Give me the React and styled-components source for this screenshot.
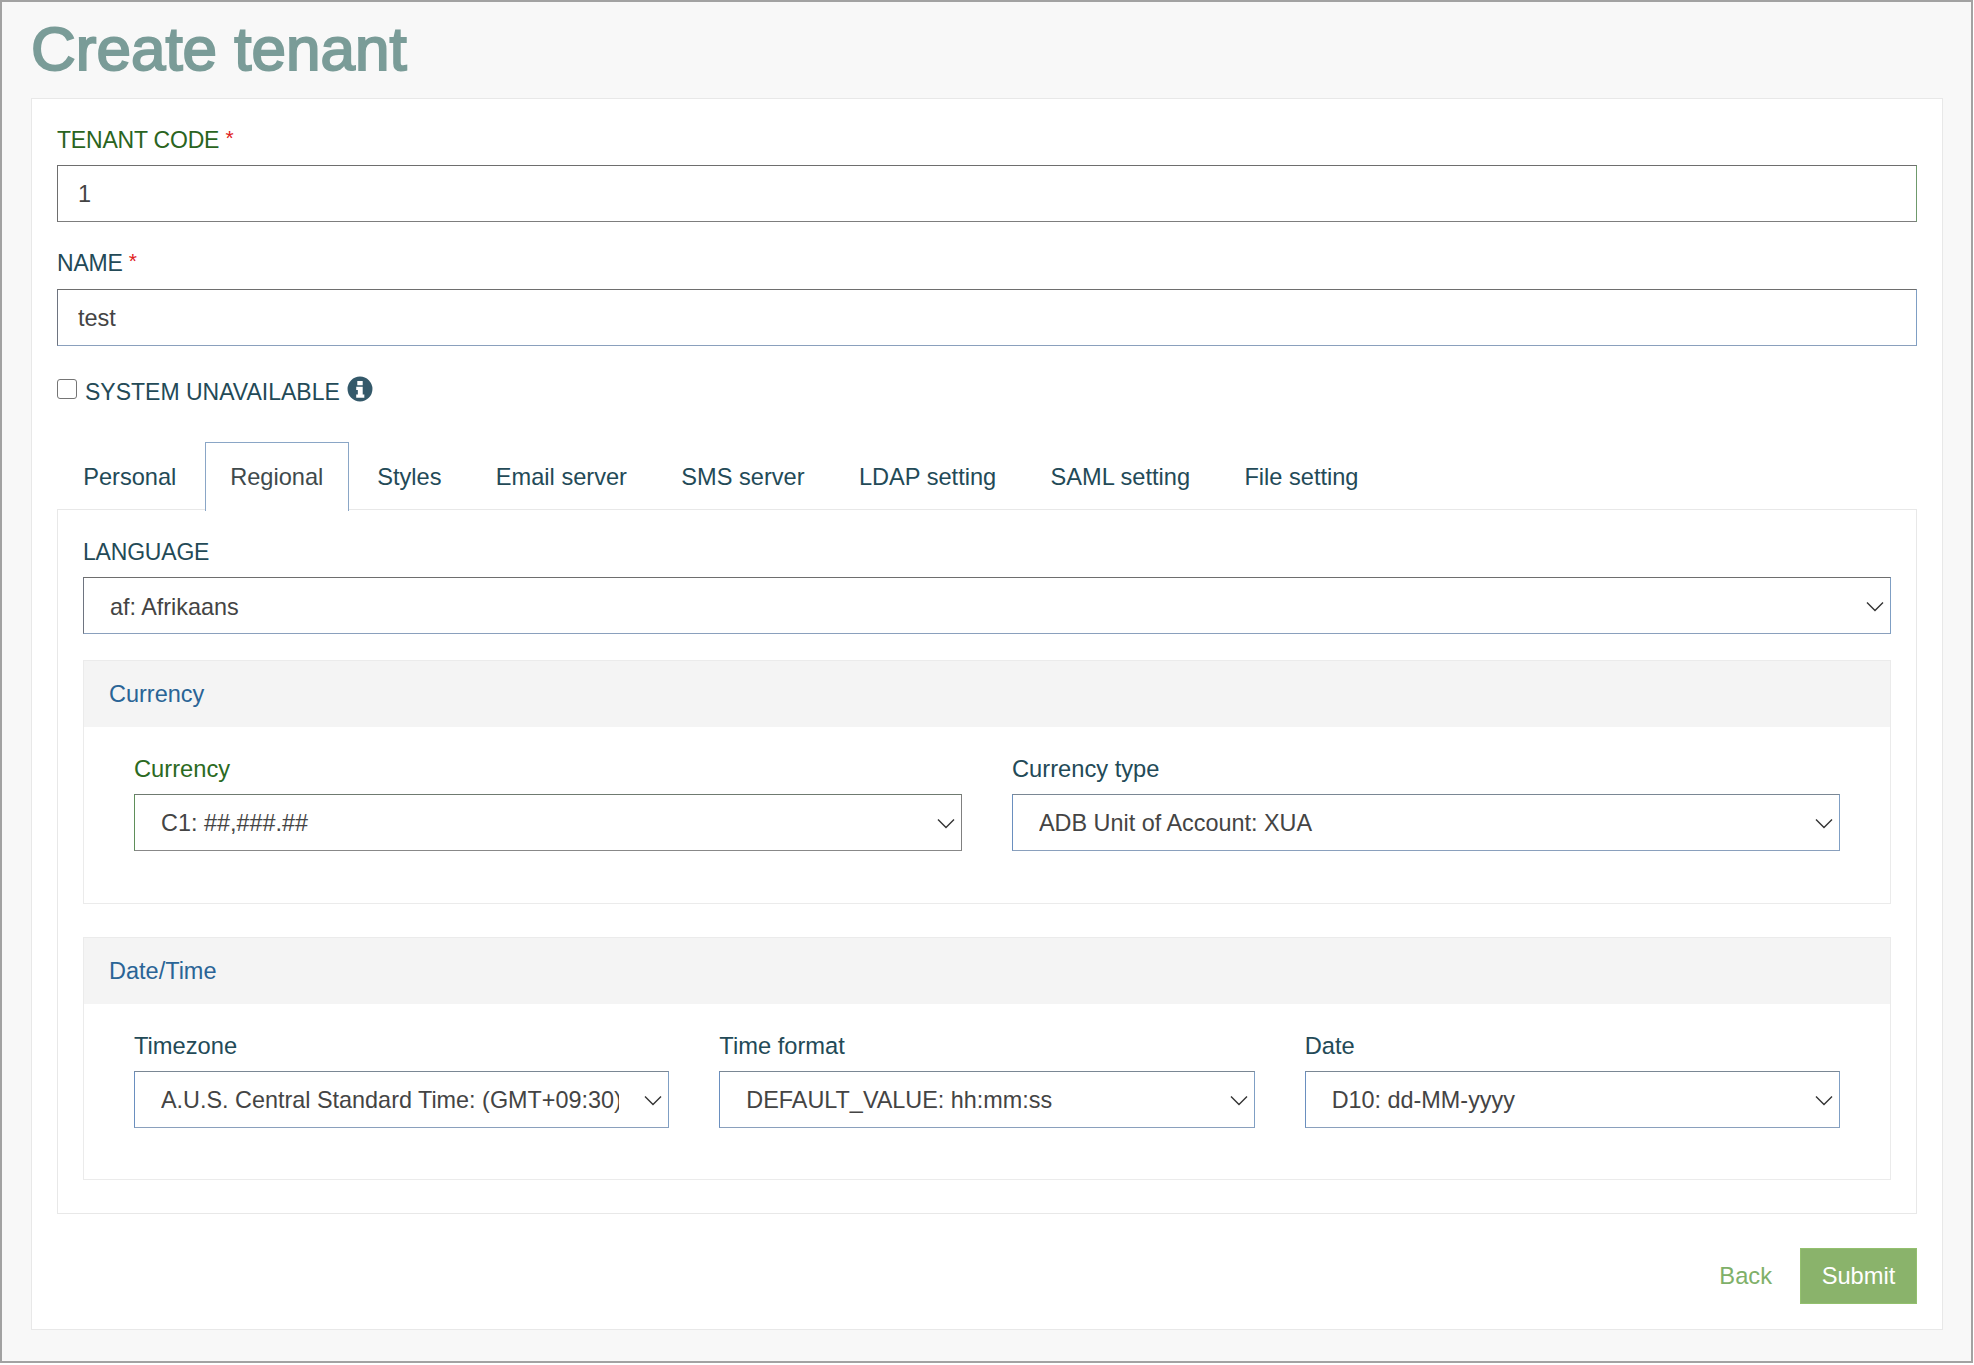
import React from "react";
import styled, { createGlobalStyle } from "styled-components";

const GlobalStyle = createGlobalStyle`
  html, body {
    margin: 0;
    padding: 0;
    background: #fff;
  }
  body {
    font-family: "Liberation Sans", Arial, sans-serif;
  }
`;

const TONES = {
  tenant: { label: "#2a6420", border: "#6e6e6e #6f9a6c #7d7d7d #6e6e6e" },
  name: { label: "#234a57", border: "#6e6e6e #7f9fc4 #8aa0bd #6e7480" },
  green: { label: "#2b6a22", border: "#6f7a70 #808080 #888 #5f8f5a" },
  blue: { label: "#234a57", border: "#7a8794 #7f9fc4 #8aa0bd #6a8fbf" },
};

const Shell = styled.div`
  box-sizing: border-box;
  width: 1973px;
  height: 1363px;
  border: 2px solid #a2a2a2;
  background: #f8f8f8;
  padding: 0 29px;
`;

const Title = styled.h1`
  margin: 0;
  height: 96px;
  font-size: 62px;
  line-height: 93px;
  font-weight: 400;
  color: #7a9c98;
  -webkit-text-stroke: 2px #7a9c98;
`;

const Card = styled.div`
  box-sizing: border-box;
  width: 1912px;
  height: 1232px;
  padding: 0 25px;
  background: #fff;
  border: 1px solid #e8e8e8;
`;

const Label = styled.label`
  display: block;
  height: 42px;
  line-height: 42px;
  margin-top: ${(p) => p.$top || 0}px;
  margin-bottom: ${(p) => p.$bottom || 4}px;
  font-size: ${(p) => (p.$caps ? 23 : 23.7)}px;
  letter-spacing: ${(p) => (p.$caps ? -0.2 : 0)}px;
  color: ${(p) => TONES[p.$tone || "blue"].label};
`;

const Star = styled.span`
  color: #e0201c;
  font-size: 21px;
  vertical-align: 3px;
`;

const TextInput = styled.input`
  display: block;
  box-sizing: border-box;
  width: 100%;
  height: 57px;
  padding: 2px 20px 0;
  font: 23.5px "Liberation Sans", Arial, sans-serif;
  color: #444;
  background: #fff;
  border: 1.5px solid;
  border-color: ${(p) => TONES[p.$tone].border};
  border-radius: 0;
  outline: none;
`;

const CheckRow = styled.div`
  display: flex;
  align-items: center;
  height: 30px;
  margin-top: 31px;
  font-size: 23px;
  color: #234a57;
`;

const Check = styled.input`
  appearance: none;
  box-sizing: border-box;
  width: 20px;
  height: 20px;
  margin: -7px 8px 0 0;
  background: #fff;
  border: 1.5px solid #757575;
  border-radius: 3px;
`;

const InfoIcon = styled.svg`
  width: 26px;
  height: 26px;
  margin: -7px 0 0 7px;
`;

const TabBar = styled.div`
  display: flex;
  height: 67px;
  margin: 35px 0 0 -1px;
  position: relative;
  z-index: 1;
`;

const Tab = styled.div`
  box-sizing: border-box;
  height: 69px;
  padding: 0 ${(p) => (p.$active ? 24.7 : 26.2)}px;
  margin: 0 ${(p) => (p.$active ? 1 : 0)}px;
  display: flex;
  align-items: center;
  font-size: 23.6px;
  color: ${(p) => (p.$active ? "#3f4a4c" : "#234a57")};
  background: ${(p) => (p.$active ? "#fff" : "transparent")};
  border: 1.5px solid ${(p) => (p.$active ? "#8aa6c6" : "transparent")};
  border-bottom: 0;
`;

const Panel = styled.div`
  box-sizing: border-box;
  height: 705px;
  padding: 21px 25px 0;
  border: 1.5px solid #e8e8e8;
`;

const SelectBox = styled.div`
  position: relative;
`;

const Chevron = styled.svg`
  position: absolute;
  top: 24px;
  right: 7px;
  width: 18px;
  height: 11px;
  pointer-events: none;
`;

const Select = styled.select`
  display: block;
  box-sizing: border-box;
  width: 100%;
  height: 57px;
  padding: 2px 49px 0 26px;
  appearance: none;
  font: 23.4px "Liberation Sans", Arial, sans-serif;
  color: #444;
  background: #fff;
  border: 1.5px solid;
  border-color: ${(p) => TONES[p.$tone || "blue"].border};
  border-radius: 0;
  outline: none;
`;

const Section = styled.section`
  box-sizing: border-box;
  height: ${(p) => p.$height}px;
  margin-top: ${(p) => p.$top}px;
  border: 1.5px solid #ebebeb;
`;

const SectionHead = styled.div`
  height: 66px;
  line-height: 66px;
  padding-left: 25px;
  font-size: 23.5px;
  color: #2a6496;
  background: #f4f4f4;
`;

const SectionBody = styled.div`
  display: grid;
  grid-template-columns: repeat(${(p) => p.$cols}, 1fr);
  column-gap: 50px;
  padding: 20.5px 50px 0;
`;

const Actions = styled.div`
  display: flex;
  justify-content: flex-end;
  align-items: center;
  gap: 28px;
  margin-top: 34px;
`;

const BackLink = styled.a`
  font-size: 23.7px;
  color: #7fb069;
`;

const SubmitButton = styled.button`
  box-sizing: border-box;
  width: 117px;
  height: 56px;
  font: 23.7px "Liberation Sans", Arial, sans-serif;
  color: #fff;
  background: #8ab36b;
  border: 1px solid #93c06e;
  border-radius: 0;
`;

const SelectField = ({ label, value, tone, caps }) => (
  <div>
    <Label $tone={tone} $caps={caps}>{label}</Label>
    <SelectBox>
      <Select $tone={tone} defaultValue={value}>
        <option>{value}</option>
      </Select>
      <Chevron viewBox="0 0 18 11">
        <path d="M1 1.5L9 9.5L17 1.5" fill="none" stroke="#333" strokeWidth="1.4" />
      </Chevron>
    </SelectBox>
  </div>
);

const TABS = ["Personal", "Regional", "Styles", "Email server", "SMS server", "LDAP setting", "SAML setting", "File setting"];

export default function App() {
  return (
    <>
      <GlobalStyle />
      <Shell>
        <Title>Create tenant</Title>
        <Card>
          <Label $tone="tenant" $caps $top={18} $bottom={6}>TENANT CODE <Star>*</Star></Label>
          <TextInput $tone="tenant" defaultValue="1" />
          <Label $tone="name" $caps $top={18} $bottom={7}>NAME <Star>*</Star></Label>
          <TextInput $tone="name" defaultValue="test" />
          <CheckRow>
            <Check type="checkbox" />
            SYSTEM UNAVAILABLE
            <InfoIcon viewBox="0 0 24 24">
              <path
                fill="#34596a"
                fillRule="evenodd"
                d="M12 0.5a11.5 11.5 0 1 0 0 23a11.5 11.5 0 1 0 0-23zM9.5 4.5h5v4h-5zM8.5 10h6v7h1.5v3h-7.5v-3h1.5v-4h-1.5z"
              />
            </InfoIcon>
          </CheckRow>
          <TabBar>
            {TABS.map((t) => (
              <Tab key={t} $active={t === "Regional"}>{t}</Tab>
            ))}
          </TabBar>
          <Panel>
            <SelectField caps tone="name" label="LANGUAGE" value="af: Afrikaans" />
            <Section $height={244} $top={26}>
              <SectionHead>Currency</SectionHead>
              <SectionBody $cols={2}>
                <SelectField tone="green" label="Currency" value="C1: ##,###.##" />
                <SelectField label="Currency type" value="ADB Unit of Account: XUA" />
              </SectionBody>
            </Section>
            <Section $height={243} $top={33}>
              <SectionHead>Date/Time</SectionHead>
              <SectionBody $cols={3}>
                <SelectField label="Timezone" value="A.U.S. Central Standard Time: (GMT+09:30)" />
                <SelectField label="Time format" value="DEFAULT_VALUE: hh:mm:ss" />
                <SelectField label="Date" value="D10: dd-MM-yyyy" />
              </SectionBody>
            </Section>
          </Panel>
          <Actions>
            <BackLink>Back</BackLink>
            <SubmitButton>Submit</SubmitButton>
          </Actions>
        </Card>
      </Shell>
    </>
  );
}
